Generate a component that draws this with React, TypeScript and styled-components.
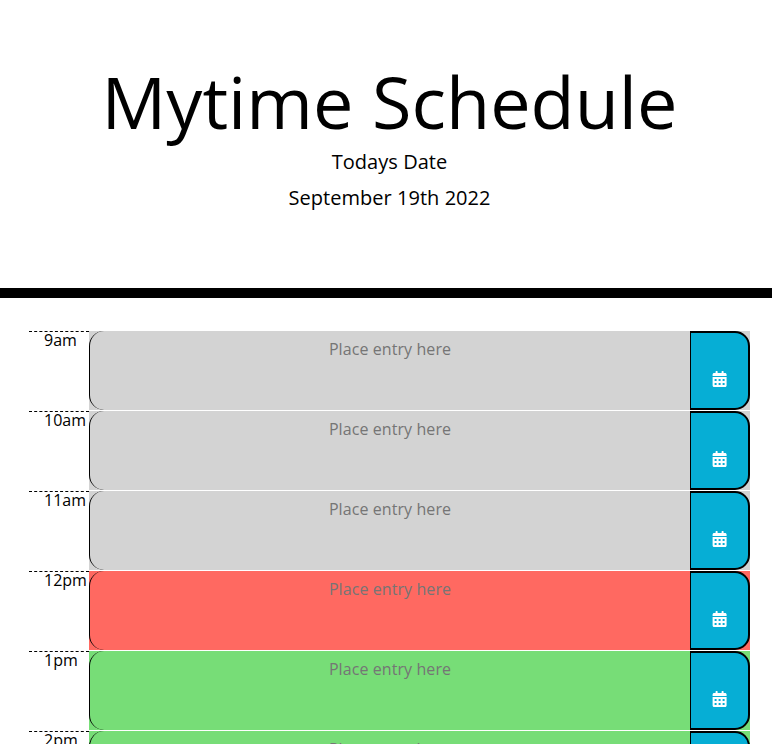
import React from 'react';
import styled, { createGlobalStyle } from 'styled-components';
import { FaCalendarAlt } from 'react-icons/fa';

type Phase = 'past' | 'present' | 'future';

const phaseColors: Record<Phase, string> = {
  past: '#d3d3d3',
  present: '#ff6961',
  future: '#77dd77',
};

const GlobalStyle = createGlobalStyle`
  *, *::before, *::after { box-sizing: border-box; }
  html, body { margin: 0; background: #fff; }
  body {
    height: 100vh;
    overflow: hidden;
    font-family: 'Open Sans', sans-serif;
    font-size: 16px;
    line-height: 1;
    color: #000;
  }
`;

const Header = styled.header`
  height: 298px;
  padding: 61px 0 0 7px;
  border-bottom: 10px solid #000;
  text-align: center;
`;

const Title = styled.h1`
  margin: 0 0 2px;
  font-size: 72px;
  font-weight: 400;
  line-height: 81px;
`;

const Lead = styled.p`
  margin: 0;
  font-size: 20px;
  font-weight: 400;
  line-height: 36px;
  letter-spacing: 0.04px;
`;

const Schedule = styled.main`
  padding: 33px 22px 0 29px;
`;

const TimeBlock = styled.div`
  display: grid;
  grid-template-columns: 60px 661px;
  height: 80px;
`;

const Hour = styled.div`
  padding-left: 15px;
  border-top: 1px dashed #000;
  line-height: 16px;
  white-space: nowrap;
`;

const Slot = styled.div<{ $phase: Phase }>`
  display: grid;
  grid-template-columns: 601px 60px;
  height: 79px;
  background: ${({ $phase }) => phaseColors[$phase]};
`;

const Entry = styled.textarea`
  width: 100%;
  height: 79px;
  margin: 0;
  padding: 7px 0 0;
  border: 0;
  border-left: 1px solid #000;
  border-radius: 15px 0 0 15px;
  outline: none;
  resize: none;
  overflow: hidden;
  background: transparent;
  font: 400 16px/22px 'Open Sans', sans-serif;
  letter-spacing: 0.08px;
  text-align: center;
  color: #000;

  &::placeholder {
    color: #757575;
    opacity: 1;
  }
`;

const SaveButton = styled.button`
  display: flex;
  align-items: flex-start;
  justify-content: center;
  height: 79px;
  margin: 0;
  padding: 38px 0 0;
  border: 2px solid #000;
  border-left-width: 1px;
  border-radius: 0 15px 15px 0;
  background: #06aed5;
  color: #fff;
  font-size: 16px;
  cursor: pointer;
`;

const CalendarIcon = styled(FaCalendarAlt)`
  width: 16px;
  height: 16px;
  transform: translateX(-0.4px);
`;

const blocks: { hour: string; phase: Phase }[] = [
  { hour: '9am', phase: 'past' },
  { hour: '10am', phase: 'past' },
  { hour: '11am', phase: 'past' },
  { hour: '12pm', phase: 'present' },
  { hour: '1pm', phase: 'future' },
  { hour: '2pm', phase: 'future' },
];

export default function App() {
  return (
    <>
      <GlobalStyle />
      <Header>
        <Title>Mytime Schedule</Title>
        <Lead>Todays Date</Lead>
        <Lead>September 19th 2022</Lead>
      </Header>
      <Schedule>
        {blocks.map(({ hour, phase }) => (
          <TimeBlock key={hour}>
            <Hour>{hour}</Hour>
            <Slot $phase={phase}>
              <Entry placeholder="Place entry here" aria-label={`${hour} entry`} />
              <SaveButton aria-label={`Save ${hour} entry`}>
                <CalendarIcon />
              </SaveButton>
            </Slot>
          </TimeBlock>
        ))}
      </Schedule>
    </>
  );
}
